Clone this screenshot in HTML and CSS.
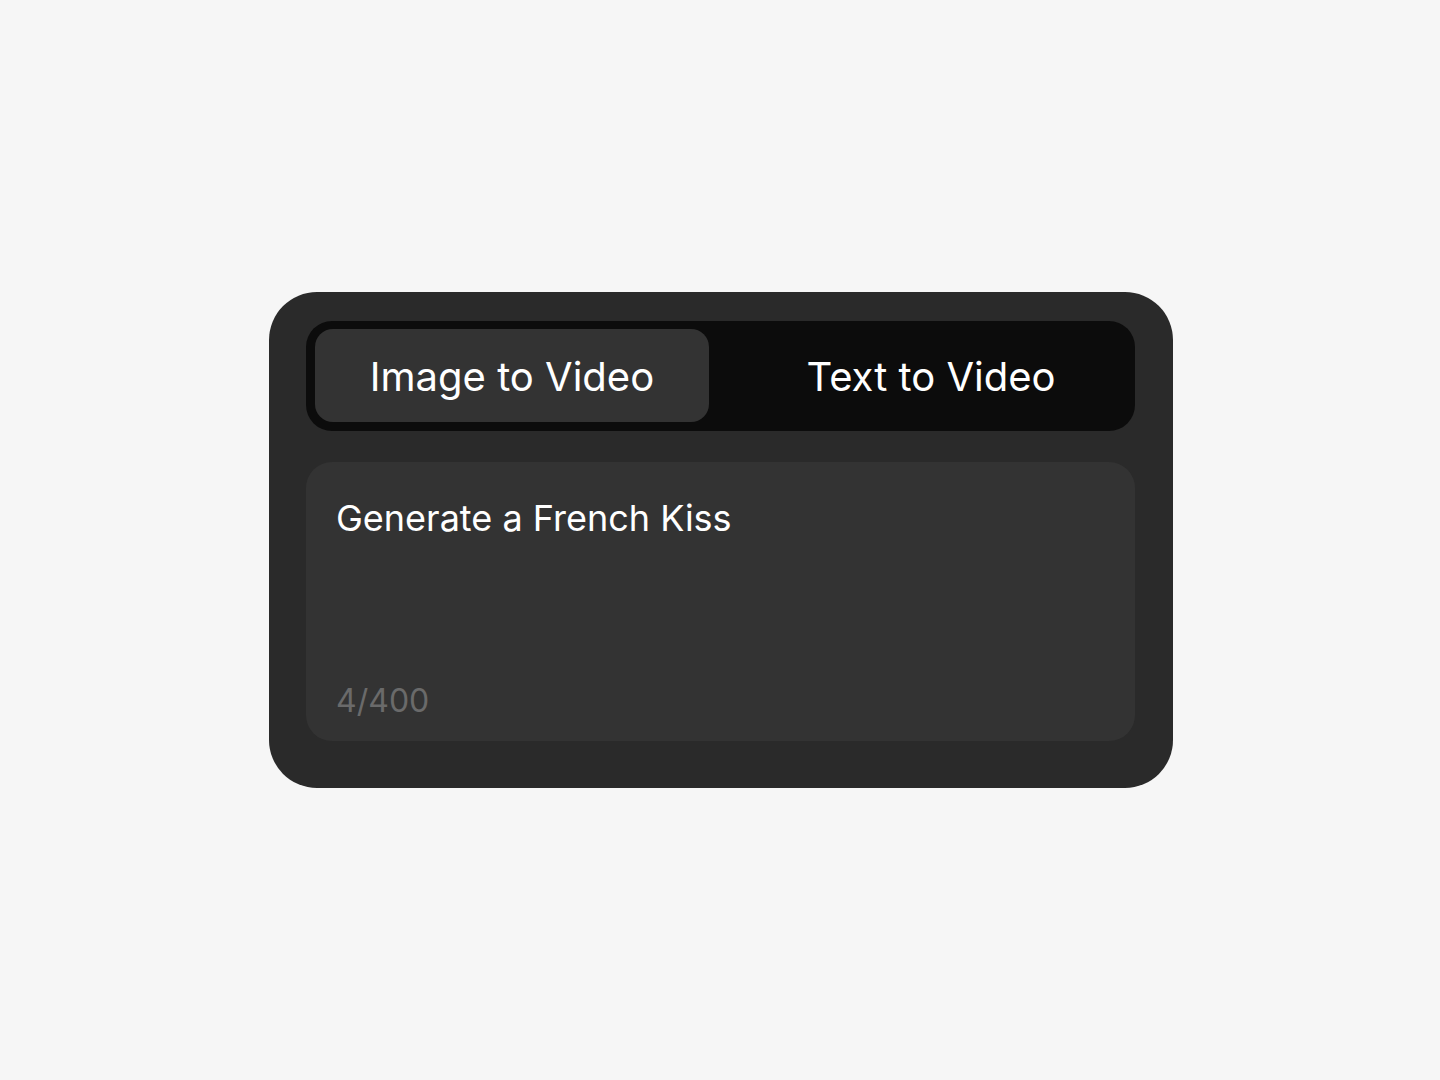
FILE: index.html
```html
<!DOCTYPE html>
<html lang="en">
<head>
<meta charset="utf-8">
<title>Video Generator</title>
<link rel="stylesheet" href="styles.css">
</head>
<body>
<main class="stage">
  <section class="card">
    <div class="tabs">
      <button class="tab active">Image to Video</button>
      <button class="tab">Text to Video</button>
    </div>
    <div class="prompt">
      <div class="prompt-text">Generate a French Kiss</div>
      <div class="counter">4/400</div>
    </div>
  </section>
</main>
</body>
</html>
```

FILE: styles.css
```css
* { box-sizing: border-box; }
html, body {
  margin: 0;
  height: 100%;
  background: #f6f6f6;
  font-family: Inter, "Noto Sans", sans-serif;
}
.stage {
  height: 1080px;
  display: flex;
  align-items: center;
  justify-content: center;
  padding-left: 2px;
}
.card {
  width: 904px;
  height: 496px;
  background: #2a2a2a;
  border-radius: 48px;
  padding: 29px 38px 47px 37px;
  display: flex;
  flex-direction: column;
  gap: 31px;
}
.tabs {
  height: 110px;
  background: #0c0c0c;
  border-radius: 26px;
  padding: 8px 9px 9px 9px;
  display: flex;
  gap: 23px;
}
.tab {
  flex: 1 1 0;
  border: 0;
  background: transparent;
  color: #ffffff;
  font-family: inherit;
  font-size: 40px;
  font-weight: 400;
  border-radius: 18px;
  cursor: pointer;
  padding: 2px 0 0 0;
}
.tab.active {
  flex: 0 0 394px;
  background: #333333;
}
.tab + .tab {
  padding-left: 4px;
}
.prompt {
  flex: 1;
  background: #333333;
  border-radius: 26px;
  padding: 34px 30px 20px 30px;
  display: flex;
  flex-direction: column;
  justify-content: space-between;
}
.prompt-text {
  color: #ffffff;
  font-size: 36px;
  line-height: 44px;
}
.counter {
  color: #6a6a6a;
  font-size: 32px;
  line-height: 40px;
}
```
